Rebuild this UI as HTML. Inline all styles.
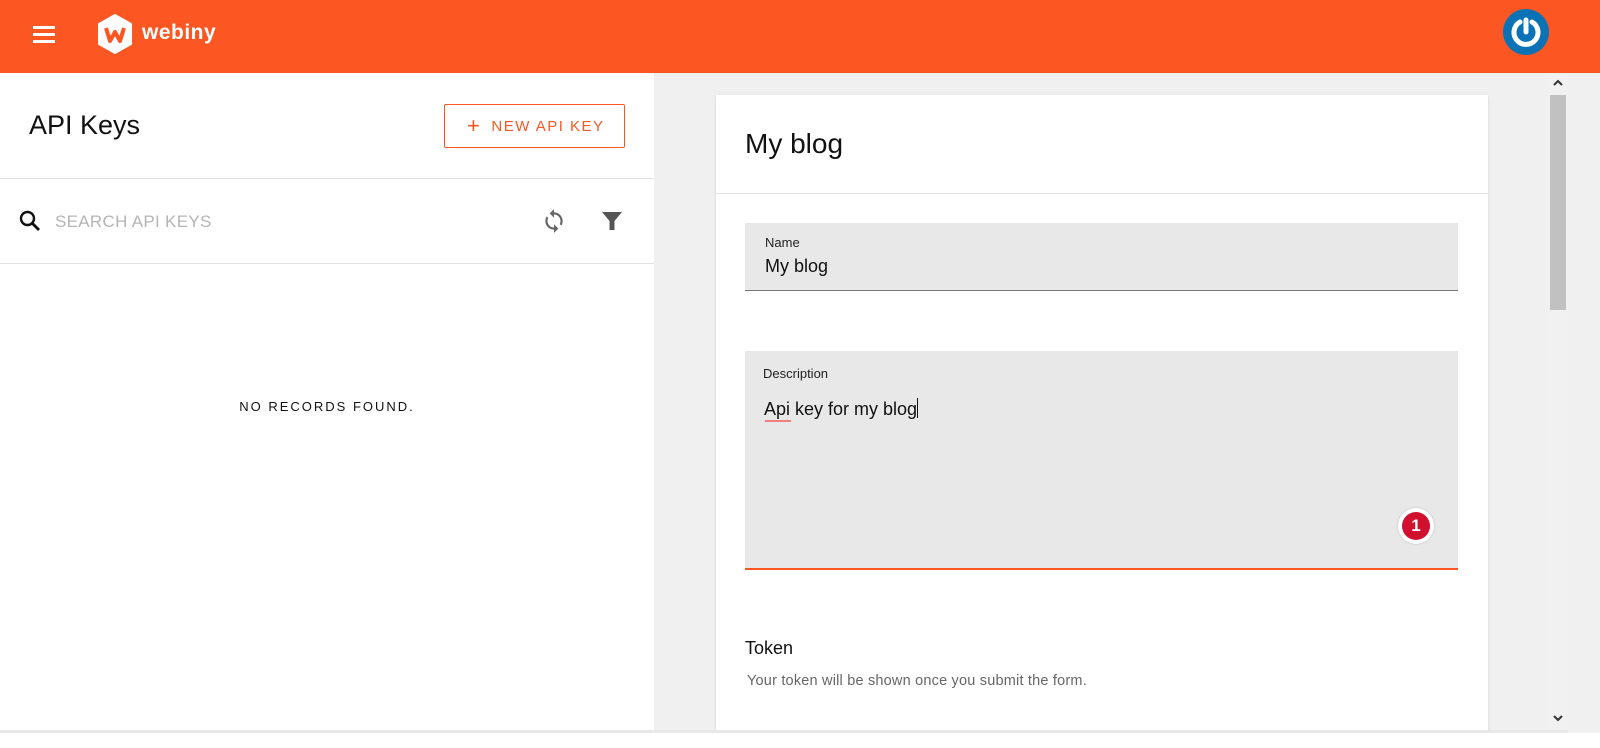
<!DOCTYPE html>
<html><head><meta charset="utf-8"><style>
*{margin:0;padding:0;box-sizing:border-box}
body{width:1600px;height:748px;overflow:hidden;font-family:"Liberation Sans",sans-serif;background:#f0f0f0;position:relative;color:#111}
.abs{position:absolute}
</style></head><body>
<div class="abs" style="left:0;top:0;width:1600px;height:73px;background:#fc5723"></div>
<div class="abs" style="left:33px;top:26px;width:22px;height:3px;background:#fff;box-shadow:0 7px 0 #fff,0 14px 0 #fff"></div>
<svg class="abs" style="left:97px;top:14px" width="36" height="40" viewBox="0 0 36 40"><polygon points="18,1 34,10 34,30 18,39 2,30 2,10" fill="#fff" stroke="#fff" stroke-width="2" stroke-linejoin="round"/><path d="M9 14 L13 27 L18 18 L23 27 L27 14" fill="none" stroke="#fc5723" stroke-width="4" stroke-linejoin="round"/></svg>
<div class="abs" style="left:142px;top:21px;color:#fff;font-size:21px;font-weight:bold;letter-spacing:0.5px">webiny</div>
<svg class="abs" style="left:1503px;top:9px" width="46" height="46" viewBox="0 0 46 46"><circle cx="23" cy="23" r="23" fill="#0a72b5"/><path d="M17 13 A12 12 0 1 0 29 13" fill="none" stroke="#fff" stroke-width="5" stroke-linecap="round"/><line x1="23" y1="11" x2="23" y2="23" stroke="#fff" stroke-width="5" stroke-linecap="round"/></svg>

<div class="abs" style="left:0;top:73px;width:654px;height:660px;background:#fff"></div>
<div class="abs" style="left:29px;top:110px;font-size:27px;color:#111">API Keys</div>
<div class="abs" style="left:444px;top:104px;width:181px;height:44px;border:1px solid #fc5723;border-radius:2px;color:#fc5723;font-size:15px;letter-spacing:1.5px;line-height:42px;padding-left:22px"><span style="font-size:22px;vertical-align:-2px;margin-right:10px">+</span>NEW API KEY</div>
<div class="abs" style="left:0;top:178px;width:654px;height:1px;background:#e0e0e0"></div>
<svg class="abs" style="left:18px;top:209px" width="24" height="24" viewBox="0 0 24 24"><circle cx="9.5" cy="9.5" r="6.5" fill="none" stroke="#111" stroke-width="2.4"/><line x1="14.5" y1="14.5" x2="21" y2="21" stroke="#111" stroke-width="2.8"/></svg>
<div class="abs" style="left:55px;top:212px;font-size:17px;color:#b5b5b5;letter-spacing:.3px">SEARCH API KEYS</div>
<svg class="abs" style="left:541px;top:208px" width="26" height="26" viewBox="0 0 24 24"><path d="M12 4V1L8 5l4 4V6c3.3 0 6 2.7 6 6 0 1-.25 2-.7 2.8l1.46 1.46C19.540 15.03 20 13.57 20 12c0-4.42-3.58-8-8-8zm0 14c-3.3 0-6-2.7-6-6 0-1 .25-2 .7-2.8L5.24 7.74C4.46 8.97 4 10.43 4 12c0 4.42 3.58 8 8 8v3l4-4-4-4v3z" fill="#666"/></svg>
<svg class="abs" style="left:600px;top:209px" width="24" height="24" viewBox="0 0 24 24"><path d="M2 3h20l-7.5 9v9h-5v-9z" fill="#555"/></svg>
<div class="abs" style="left:0;top:263px;width:654px;height:1px;background:#e0e0e0"></div>
<div class="abs" style="left:0;top:399px;width:654px;text-align:center;font-size:13px;letter-spacing:2px;color:#111">NO RECORDS FOUND.</div>

<div class="abs" style="left:716px;top:95px;width:772px;height:640px;background:#fff;box-shadow:0 1px 3px rgba(0,0,0,.12)"></div>
<div class="abs" style="left:745px;top:128px;font-size:28px;color:#111">My blog</div>
<div class="abs" style="left:716px;top:193px;width:772px;height:1px;background:#e0e0e0"></div>
<div class="abs" style="left:745px;top:223px;width:713px;height:68px;background:#e8e8e8;border-bottom:1px solid #777"></div>
<div class="abs" style="left:765px;top:235px;font-size:13px;color:#222">Name</div>
<div class="abs" style="left:765px;top:256px;font-size:18px;color:#111">My blog</div>
<div class="abs" style="left:745px;top:351px;width:713px;height:219px;background:#e8e8e8;border-bottom:2px solid #fc5723"></div>
<div class="abs" style="left:763px;top:366px;font-size:13px;color:#222">Description</div>
<div class="abs" style="left:764px;top:398px;font-size:18px;color:#111">Api key for my blog<span style="display:inline-block;width:1px;height:20px;background:#111;vertical-align:-3px"></span></div>
<div class="abs" style="left:765px;top:420px;width:26px;height:2px;background:#f08080"></div>
<div class="abs" style="left:1398px;top:508px;width:36px;height:36px;border-radius:50%;background:#fff;box-shadow:0 0 2px rgba(0,0,0,.2)"></div>
<div class="abs" style="left:1402px;top:512px;width:28px;height:28px;border-radius:50%;background:#d0102e;color:#fff;font-weight:bold;font-size:17px;text-align:center;line-height:28px">1</div>
<div class="abs" style="left:745px;top:638px;font-size:18px;color:#111">Token</div>
<div class="abs" style="left:747px;top:673px;font-size:14.5px;color:#666;letter-spacing:.2px">Your token will be shown once you submit the form.</div>

<div class="abs" style="left:1548px;top:73px;width:20px;height:660px;background:#f1f1f1"></div>
<div class="abs" style="left:1550px;top:95px;width:16px;height:215px;background:#c1c1c1"></div>
<svg class="abs" style="left:1552px;top:78px" width="12" height="10" viewBox="0 0 12 10"><path d="M2 7l4-4 4 4" fill="none" stroke="#333" stroke-width="2"/></svg>
<svg class="abs" style="left:1552px;top:713px" width="12" height="10" viewBox="0 0 12 10"><path d="M2 3l4 4 4-4" fill="none" stroke="#333" stroke-width="2"/></svg>
<div class="abs" style="left:0;top:733px;width:1600px;height:15px;background:#fff"></div>
<div class="abs" style="left:0;top:730px;width:1568px;height:3px;background:#e8e8e8"></div>
</body></html>
